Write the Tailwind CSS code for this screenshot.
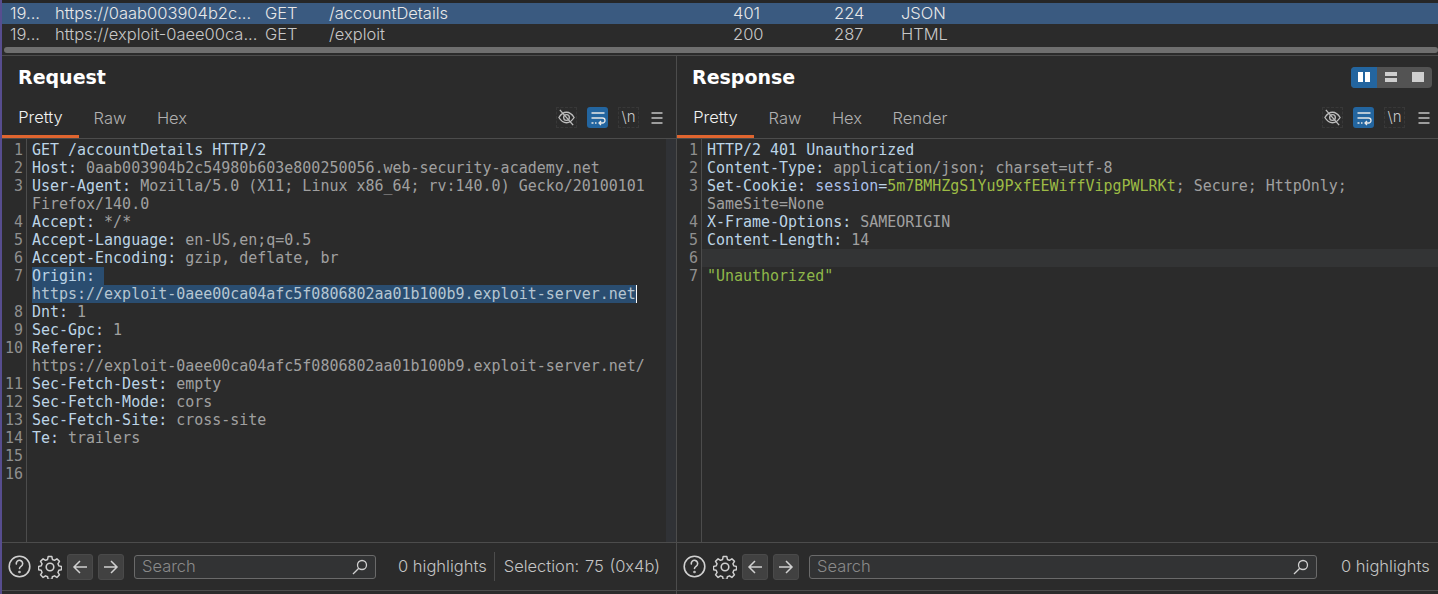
<!DOCTYPE html>
<html><head><meta charset="utf-8"><script src="https://cdn.jsdelivr.net/npm/@tailwindcss/browser@4"></script></head>
<body class="m-0 bg-[#2b2b2b]">
<div class="flex w-[1438px] h-[594px] overflow-hidden bg-[#2b2b2b] font-['Inter',sans-serif] text-[16.5px] font-light text-[#c8c8c8]">
  <div class="w-[2px] bg-[#574d8f] shrink-0"></div>
  <div class="flex flex-col flex-1 min-w-0">
    <!-- table -->
    <div class="h-[3px] bg-[#262626]"></div>
    <div class="grid grid-cols-[45px_210px_64px_404px_101px_67px_1fr] h-[21px] items-center bg-[#3a5a80] text-[#e8e8e8] pl-[8px] leading-[21px] whitespace-nowrap">
      <span>19...</span><span>https://0aab003904b2c...</span><span>GET</span><span>/accountDetails</span><span>401</span><span>224</span><span>JSON</span>
    </div>
    <div class="grid grid-cols-[45px_210px_64px_404px_101px_67px_1fr] h-[21px] items-center pl-[8px] leading-[21px] whitespace-nowrap">
      <span>19...</span><span>https://exploit-0aee00ca...</span><span>GET</span><span>/exploit</span><span>200</span><span>287</span><span>HTML</span>
    </div>
    <div class="h-[10px] pt-[2px] pl-[2px]"><div class="h-[6px] rounded-full bg-[#6f6f6f]"></div></div>
    <div class="h-[1px] bg-[#4c4c4c]"></div>
    <!-- panes -->
    <div class="flex flex-1 min-h-0">
      <!-- request -->
      <section class="w-[675px] shrink-0 flex flex-col border-r border-[#4c4c4c]">
        <header class="h-[44px] flex items-center pl-[16px] pb-[2px] font-['DejaVu_Sans'] font-bold text-[19px] text-white">Request</header>
        <nav class="h-[39px] flex items-stretch border-b border-[#4c4c4c]">
          <div class="w-[77px] flex items-center justify-center text-[#f2f2f2] border-b-[3px] border-[#e0652f] h-[38px] mb-[-1px]">Pretty</div>
          <div class="w-[62px] flex items-center justify-center text-[#b0b0b0] pb-[1px]">Raw</div>
          <div class="w-[62px] flex items-center justify-center text-[#b0b0b0] pb-[1px]">Hex</div>
          <div class="ml-auto flex items-center pr-[12px] pb-[3px]">
            <div class="w-[21px] h-[21px] border border-dashed border-[#383838] flex items-center justify-center mr-[10px]"><svg class="w-[19px] h-[19px] shrink-0" viewBox="0 0 20 20" fill="none" stroke="#bdbdbd" stroke-width="1.4"><path d="M2 10c2.500-4 5-5.500 8-5.500S15.500 6 18 10c-2.500 4-5 5.500-8 5.500S4.500 14 2 10z"/><circle cx="10" cy="10" r="3"/><path d="M3 2l14 16"/></svg></div>
            <div class="w-[21px] h-[21px] rounded-[3px] bg-[#23659f] flex items-center justify-center mr-[10px]"><svg class="w-[16px] h-[16px]" viewBox="0 0 16 16" fill="none" stroke="#e8e8e8" stroke-width="1.3"><path d="M1.500 3h13M1.500 8h11a2.200 2.200 0 010 5H9M11 11l-2 2 2 2M1.500 13h2M5 13h1.500"/></svg></div>
            <div class="w-[21px] h-[21px] border border-dashed border-[#383838] flex items-center justify-center mr-[11px] text-[15px] text-[#c8c8c8]">\n</div>
            <svg class="w-[14px] h-[14px]" viewBox="0 0 14 14" fill="none" stroke="#c4c4c4" stroke-width="1.3"><path d="M1.500 2h11M1.500 7h11M1.500 12h11"/></svg>
          </div>
        </nav>
        <div class="flex-1 flex min-h-0 font-['DejaVu_Sans_Mono'] font-normal leading-[18px] text-[14.97px] text-[#a0a0a0]">
          <div class="w-[25px] shrink-0 border-r border-[#4c4c4c] text-right pr-[3px] pt-[2px] text-[#8f8f8f] whitespace-pre">1
2
3

4
5
6
7

8
9
10

11
12
13
14
15
16</div>
          <div class="flex-1 pl-[5px] pt-[2px] whitespace-pre min-w-0"><div><span class="text-[#bcd4e6]">GET /accountDetails HTTP/2</span></div><div><span class="text-[#bcd4e6]">Host:</span> 0aab003904b2c54980b603e800250056.web-security-academy.net</div><div><span class="text-[#bcd4e6]">User-Agent:</span> Mozilla/5.0 (X11; Linux x86_64; rv:140.0) Gecko/20100101</div><div>Firefox/140.0</div><div><span class="text-[#bcd4e6]">Accept:</span> */*</div><div><span class="text-[#bcd4e6]">Accept-Language:</span> en-US,en;q=0.5</div><div><span class="text-[#bcd4e6]">Accept-Encoding:</span> gzip, deflate, br</div><div><span class="bg-[#2a4d70] text-[#bcd4e6]">Origin: </span></div><div class="flex items-stretch"><span class="bg-[#2a4d70] text-[#b6c6d2]">https://exploit-0aee00ca04afc5f0806802aa01b100b9.exploit-server.net</span><span class="w-[1px] bg-white"></span></div><div><span class="text-[#bcd4e6]">Dnt:</span> 1</div><div><span class="text-[#bcd4e6]">Sec-Gpc:</span> 1</div><div><span class="text-[#bcd4e6]">Referer:</span></div><div>https://exploit-0aee00ca04afc5f0806802aa01b100b9.exploit-server.net/</div><div><span class="text-[#bcd4e6]">Sec-Fetch-Dest:</span> empty</div><div><span class="text-[#bcd4e6]">Sec-Fetch-Mode:</span> cors</div><div><span class="text-[#bcd4e6]">Sec-Fetch-Site:</span> cross-site</div><div><span class="text-[#bcd4e6]">Te:</span> trailers</div></div>
          <div class="w-[10px] shrink-0 bg-[#303236]"></div>
        </div>
        <footer class="h-[49px] border-t border-b border-[#4c4c4c] flex items-center pl-[6px] mb-[3px]">
          <svg class="w-[23px] h-[23px] shrink-0" viewBox="0 0 23 23" fill="none" stroke="#d0d0d0" stroke-width="1.6"><circle cx="11.500" cy="11.500" r="10.300"/><path d="M8.300 9a3.200 3.200 0 116 1c-.6 1.300-2.800 1.700-2.800 3.500" stroke-linecap="round"/><circle cx="11.500" cy="17" r=".5"/></svg>
          <svg class="w-[24px] h-[24px] ml-[7px] shrink-0" viewBox="0 0 24 24" fill="none" stroke="#d0d0d0" stroke-width="1.600" stroke-linejoin="round"><circle cx="12" cy="12" r="3.800"/><path d="M10 1.500h4l.6 3.100 2.300 1 2.600-1.700 2.800 2.800-1.700 2.600 1 2.300 2.900.6v3.600l-2.900.6-1 2.300 1.700 2.600-2.800 2.800-2.600-1.700-2.300 1-.6 2.900h-4l-.6-2.900-2.300-1-2.600 1.700-2.800-2.800 1.700-2.600-1-2.300-2.900-.6v-3.600l2.900-.6 1-2.300-1.700-2.600 2.800-2.800 2.600 1.700 2.300-1z" transform="translate(12 12) scale(.92) translate(-12 -12.800)"/></svg>
          <div class="w-[26px] h-[26px] rounded-[3px] bg-[#414141] border border-[#4a4a4a] ml-[5px] flex items-center justify-center shrink-0"><svg class="w-[16px] h-[16px]" viewBox="0 0 16 16" fill="none" stroke="#d0d0d0" stroke-width="1.500"><path d="M15 8H2M8 2L2 8l6 6"/></svg></div>
          <div class="w-[26px] h-[26px] rounded-[3px] bg-[#414141] border border-[#4a4a4a] ml-[5px] flex items-center justify-center shrink-0"><svg class="w-[16px] h-[16px]" viewBox="0 0 16 16" fill="none" stroke="#d0d0d0" stroke-width="1.500"><path d="M1 8h13M8 2l6 6-6 6"/></svg></div>
          <div class="w-[242px] h-[24px] rounded-[3px] bg-[#323334] border border-[#6a6a6a] ml-[10px] flex items-center justify-between pl-[7px] pr-[7px] text-[#8a8a8a] shrink-0"><span>Search</span><svg class="w-[16px] h-[16px]" viewBox="0 0 16 16" fill="none" stroke="#d0d0d0" stroke-width="1.300"><circle cx="10" cy="6" r="4.500"/><path d="M6.800 9.200L1 15"/></svg></div>
          <span class="ml-[22px] text-[#c4c4c4] whitespace-nowrap">0 highlights</span>
          <div class="w-[1px] h-[29px] bg-[#4c4c4c] ml-[7px]"></div>
          <span class="ml-[9px] text-[#c4c4c4] whitespace-nowrap [word-spacing:1px]">Selection: 75 (0x4b)</span>
        </footer>
      </section>
      <!-- response -->
      <section class="flex-1 min-w-0 flex flex-col">
        <header class="h-[44px] flex items-center justify-between pl-[15px] pr-[6px] pb-[2px] font-['DejaVu_Sans'] font-bold text-[19px] text-white">
          <span>Response</span>
          <div class="flex w-[81px] h-[21px] rounded-[4px] bg-[#535353] overflow-hidden">
            <div class="w-[26px] bg-[#23659f] flex items-center justify-center"><svg class="w-[12px] h-[10px]" viewBox="0 0 12 10" fill="#fff"><rect width="5" height="10"/><rect x="7" width="5" height="10"/></svg></div>
            <div class="w-[27px] flex items-center justify-center"><svg class="w-[12px] h-[10px]" viewBox="0 0 12 10" fill="#cfcfcf"><rect width="12" height="4"/><rect y="6" width="12" height="4"/></svg></div>
            <div class="w-[28px] flex items-center justify-center"><svg class="w-[12px] h-[10px]" viewBox="0 0 12 10" fill="#cfcfcf"><rect width="12" height="10"/></svg></div>
          </div>
        </header>
        <nav class="h-[39px] flex items-stretch border-b border-[#4c4c4c]">
          <div class="w-[77px] flex items-center justify-center text-[#f2f2f2] border-b-[3px] border-[#e0652f] h-[38px] mb-[-1px]">Pretty</div>
          <div class="w-[62px] flex items-center justify-center text-[#b0b0b0] pb-[1px]">Raw</div>
          <div class="w-[62px] flex items-center justify-center text-[#b0b0b0] pb-[1px]">Hex</div>
          <div class="w-[84px] flex items-center justify-center text-[#b0b0b0] pb-[1px]">Render</div>
          <div class="ml-auto flex items-center pr-[7px] pb-[3px]">
            <div class="w-[21px] h-[21px] border border-dashed border-[#383838] flex items-center justify-center mr-[10px]"><svg class="w-[19px] h-[19px] shrink-0" viewBox="0 0 20 20" fill="none" stroke="#bdbdbd" stroke-width="1.4"><path d="M2 10c2.500-4 5-5.500 8-5.500S15.500 6 18 10c-2.500 4-5 5.500-8 5.500S4.500 14 2 10z"/><circle cx="10" cy="10" r="3"/><path d="M3 2l14 16"/></svg></div>
            <div class="w-[21px] h-[21px] rounded-[3px] bg-[#23659f] flex items-center justify-center mr-[10px]"><svg class="w-[16px] h-[16px]" viewBox="0 0 16 16" fill="none" stroke="#e8e8e8" stroke-width="1.3"><path d="M1.500 3h13M1.500 8h11a2.200 2.200 0 010 5H9M11 11l-2 2 2 2M1.500 13h2M5 13h1.500"/></svg></div>
            <div class="w-[21px] h-[21px] border border-dashed border-[#383838] flex items-center justify-center mr-[12px] text-[15px] text-[#c8c8c8]">\n</div>
            <svg class="w-[14px] h-[14px]" viewBox="0 0 14 14" fill="none" stroke="#c4c4c4" stroke-width="1.3"><path d="M1.500 2h11M1.500 7h11M1.500 12h11"/></svg>
          </div>
        </nav>
        <div class="flex-1 flex min-h-0 font-['DejaVu_Sans_Mono'] font-normal leading-[18px] text-[14.97px] text-[#a0a0a0]">
          <div class="w-[25px] shrink-0 border-r border-[#4c4c4c] text-right pr-[3px] pt-[2px] text-[#8f8f8f] whitespace-pre">1
2
3

4
5
6
7</div>
          <div class="flex-1 pt-[2px] whitespace-pre min-w-0"><div class="pl-[5px]"><span class="text-[#bcd4e6]">HTTP/2 401 Unauthorized</span></div><div class="pl-[5px]"><span class="text-[#bcd4e6]">Content-Type:</span> application/json; charset=utf-8</div><div class="pl-[5px]"><span class="text-[#bcd4e6]">Set-Cookie:</span> <span class="text-[#a9bfe8]">session</span><span class="text-[#bcd4e6]">=</span><span class="text-[#9dbb45]">5m7BMHZgS1Yu9PxfEEWiffVipgPWLRKt</span>; Secure; HttpOnly;</div><div class="pl-[5px]">SameSite=None</div><div class="pl-[5px]"><span class="text-[#bcd4e6]">X-Frame-Options:</span> SAMEORIGIN</div><div class="pl-[5px]"><span class="text-[#bcd4e6]">Content-Length:</span> 14</div><div class="h-[18px] bg-[#333435]"></div><div class="pl-[5px] text-[#8fb84a]">"Unauthorized"</div></div>
        </div>
        <footer class="h-[49px] border-t border-b border-[#4c4c4c] flex items-center pl-[6px] mb-[3px]">
          <svg class="w-[23px] h-[23px] shrink-0" viewBox="0 0 23 23" fill="none" stroke="#d0d0d0" stroke-width="1.6"><circle cx="11.500" cy="11.500" r="10.300"/><path d="M8.300 9a3.200 3.200 0 116 1c-.6 1.300-2.800 1.700-2.800 3.500" stroke-linecap="round"/><circle cx="11.500" cy="17" r=".5"/></svg>
          <svg class="w-[24px] h-[24px] ml-[7px] shrink-0" viewBox="0 0 24 24" fill="none" stroke="#d0d0d0" stroke-width="1.600" stroke-linejoin="round"><circle cx="12" cy="12" r="3.800"/><path d="M10 1.500h4l.6 3.100 2.300 1 2.600-1.700 2.800 2.800-1.700 2.600 1 2.300 2.900.6v3.600l-2.900.6-1 2.300 1.700 2.600-2.800 2.800-2.600-1.700-2.300 1-.6 2.900h-4l-.6-2.900-2.300-1-2.600 1.700-2.800-2.800 1.700-2.600-1-2.300-2.900-.6v-3.600l2.900-.6 1-2.300-1.700-2.600 2.800-2.800 2.600 1.700 2.300-1z" transform="translate(12 12) scale(.92) translate(-12 -12.800)"/></svg>
          <div class="w-[26px] h-[26px] rounded-[3px] bg-[#414141] border border-[#4a4a4a] ml-[5px] flex items-center justify-center shrink-0"><svg class="w-[16px] h-[16px]" viewBox="0 0 16 16" fill="none" stroke="#d0d0d0" stroke-width="1.500"><path d="M15 8H2M8 2L2 8l6 6"/></svg></div>
          <div class="w-[26px] h-[26px] rounded-[3px] bg-[#414141] border border-[#4a4a4a] ml-[5px] flex items-center justify-center shrink-0"><svg class="w-[16px] h-[16px]" viewBox="0 0 16 16" fill="none" stroke="#d0d0d0" stroke-width="1.500"><path d="M1 8h13M8 2l6 6-6 6"/></svg></div>
          <div class="w-[508px] h-[24px] rounded-[3px] bg-[#323334] border border-[#6a6a6a] ml-[10px] flex items-center justify-between pl-[7px] pr-[7px] text-[#8a8a8a] shrink-0"><span>Search</span><svg class="w-[16px] h-[16px]" viewBox="0 0 16 16" fill="none" stroke="#d0d0d0" stroke-width="1.300"><circle cx="10" cy="6" r="4.500"/><path d="M6.800 9.200L1 15"/></svg></div>
          <span class="ml-[24px] text-[#c4c4c4] whitespace-nowrap">0 highlights</span>
        </footer>
      </section>
    </div>
  </div>
</div>
</body></html>
